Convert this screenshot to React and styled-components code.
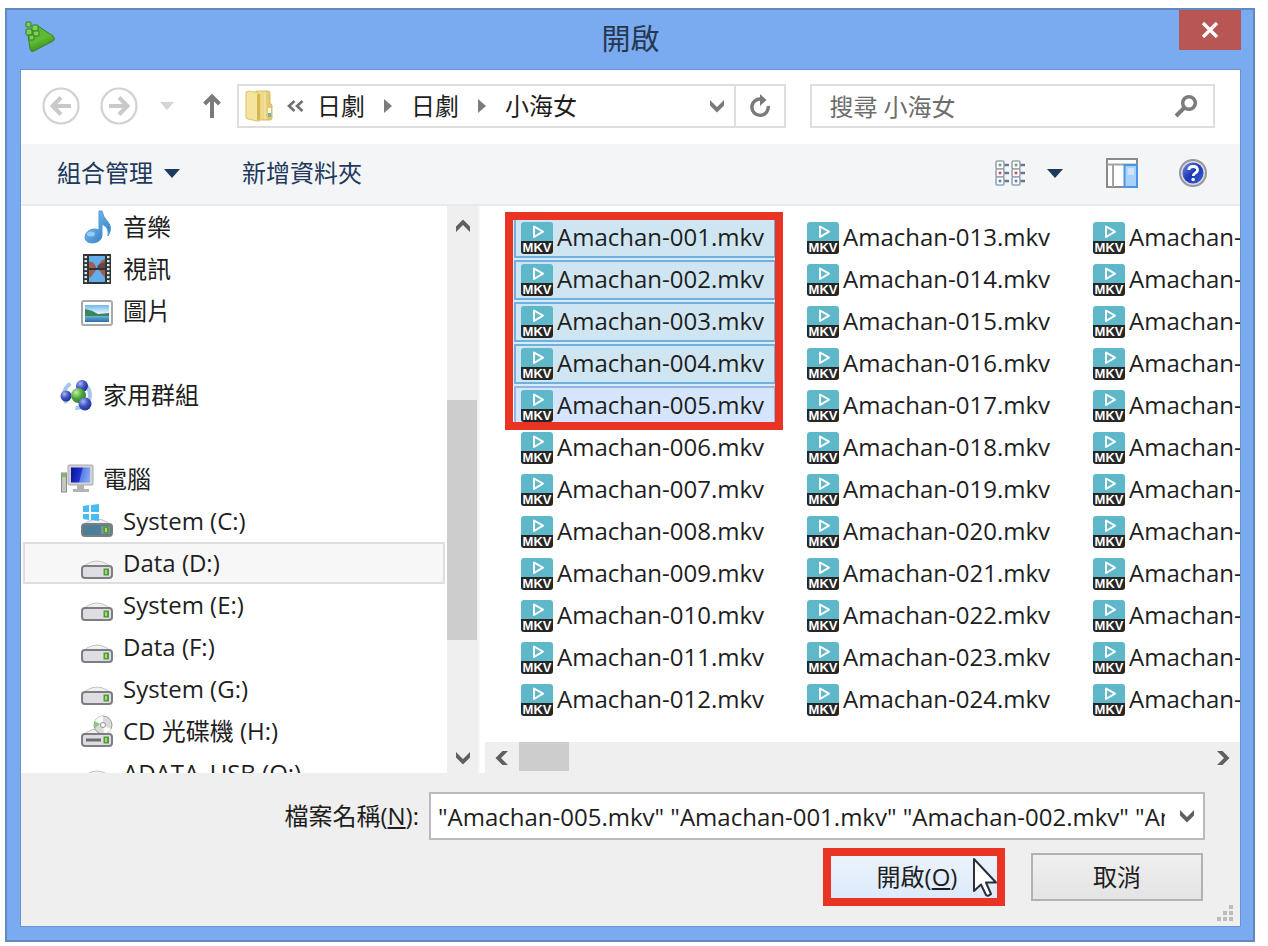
import React, { useState } from "react";
import styled, { createGlobalStyle, css } from "styled-components";

const GlobalStyle = createGlobalStyle`
  * {
    box-sizing: border-box;
  }

  body {
    margin: 0;
    background: #ffffff;
    font-family: "Open Sans", "Noto Sans CJK TC", sans-serif;
    font-size: 24px;
    line-height: 32px;
    color: #1e1e1e;
  }

  button,
  input {
    font: inherit;
    color: inherit;
  }

  button {
    padding: 0;
    border: 0;
    background: none;
  }

  svg {
    display: block;
    flex: none;
  }
`;

const Screen = styled.div`
  height: 100vh;
  min-height: 640px;
  padding: 8px 13px 4px 5px;
`;

const Window = styled.div`
  height: 100%;
  display: flex;
  flex-direction: column;
  padding: 0 12px 13px 13px;
  background: #7aabf0;
  border: 2px solid #6288bd;
`;

// Title bar
const TitleBar = styled.header`
  flex: none;
  height: 59px;
  display: grid;
  grid-template-columns: 62px 1fr 62px;
  align-items: start;
`;

const AppIcon = styled.div`
  padding: 11px 0 0 4px;
`;

const Title = styled.h1`
  margin: 0;
  padding-top: 9px;
  text-align: center;
  font-size: 29px;
  font-weight: 400;
  line-height: 40px;
  color: #26374f;
`;

const CloseButton = styled.button`
  height: 40px;
  display: flex;
  align-items: center;
  justify-content: center;
  background: #b85654;
`;

const Body = styled.div`
  flex: 1;
  min-height: 0;
  display: flex;
  flex-direction: column;
  background: #ffffff;
  border: 1px solid #6a93d2;
`;

// Address row
const NavRow = styled.nav`
  flex: none;
  height: 74px;
  display: flex;
  align-items: center;
  padding: 0 25px 2px 20px;
`;

const NavButtons = styled.div`
  width: 196px;
  flex: none;
  display: flex;
  align-items: center;
`;

const IconButton = styled.button`
  flex: none;
  display: flex;
  align-items: center;
  justify-content: center;
  width: ${({ $width }) => $width || 40}px;
  height: ${({ $height }) => $height || 40}px;
`;

const AddressBar = styled.div`
  flex: 550 1 0;
  min-width: 0;
  height: 44px;
  display: flex;
  align-items: center;
  border: 2px solid #dedede;
`;

const Crumbs = styled.div`
  flex: 1;
  min-width: 0;
  display: flex;
  align-items: center;
  padding-left: 6px;
  overflow: hidden;
`;

const Crumb = styled.a`
  flex: none;
  color: #1e1e1e;
  text-decoration: none;
`;

const CrumbArrow = styled.span`
  flex: none;
  width: 46px;
  display: flex;
  justify-content: center;
`;

const CrumbMore = styled.span`
  width: 44px;
  display: flex;
  justify-content: center;
`;

const Refresh = styled(IconButton)`
  border-left: 2px solid #dedede;
`;

const SearchBox = styled.div`
  flex: 404 1 0;
  min-width: 0;
  height: 44px;
  margin-left: 24px;
  display: flex;
  align-items: center;
  border: 2px solid #dedede;
`;

const TextInput = styled.input`
  flex: 1;
  min-width: 0;
  height: 40px;
  padding: 0 0 0 ${({ $pad }) => $pad}px;
  border: 0;
  outline: 0;
  background: transparent;

  &::placeholder {
    color: #6d6d6d;
    opacity: 1;
  }
`;

// Command bar
const Toolbar = styled.div`
  flex: none;
  height: 62px;
  display: flex;
  align-items: center;
  padding: 0 33px 2px 36px;
  background: #f4f5f7;
  border-bottom: 2px solid #e9eaec;
  color: #1e395b;
`;

const CommandButton = styled.button`
  display: flex;
  align-items: center;
  gap: 11px;
  margin-right: 62px;
`;

const ToolbarRight = styled.div`
  margin-left: auto;
  display: flex;
  align-items: center;
`;

const ViewButton = styled.button`
  display: flex;
  align-items: center;
  gap: 20px;
  margin-right: 43px;
`;

const PaneButton = styled.button`
  margin-right: 41px;
`;

// Content
const Content = styled.div`
  flex: 1;
  min-height: 0;
  display: flex;
`;

const Sidebar = styled.ul`
  flex: none;
  width: 426px;
  margin: 0;
  padding: 0 2px;
  list-style: none;
  overflow: hidden;
`;

const Place = styled.a`
  height: 42px;
  display: flex;
  align-items: center;
  gap: ${({ $level }) => ($level ? 10 : 9)}px;
  padding-left: ${({ $level }) => ($level ? 56 : 35)}px;
  border: 2px solid transparent;
  color: #1e1e1e;
  text-decoration: none;

  ${({ $active }) =>
    $active &&
    css`
      background: #f7f7f7;
      border-color: #dedede;
    `}
`;

const Spacer = styled.li`
  height: 42px;
`;

const VerticalBar = styled.div`
  flex: none;
  width: 31px;
  display: flex;
  flex-direction: column;
  align-items: center;
  background: #efefef;
`;

const VerticalTrack = styled.div`
  flex: 1;
  width: 100%;
  display: grid;
  grid-template-rows: 154fr 240fr 103fr;
`;

const VerticalThumb = styled.div`
  grid-row: 2;
  margin-right: 1px;
  background: #cdcdcd;
`;

const Splitter = styled.div`
  flex: none;
  width: 7px;
  border-left: 2px solid #f7f7f7;
`;

const FilePane = styled.div`
  flex: 1;
  min-width: 0;
  display: flex;
  flex-direction: column;
`;

const FileArea = styled.div`
  flex: 1;
  min-height: 0;
  position: relative;
  overflow: hidden;
`;

const FileList = styled.ul`
  margin: 0;
  padding: 12px 0 0 29px;
  list-style: none;
  display: grid;
  grid-auto-flow: column;
  grid-template-rows: repeat(12, 40px);
  grid-auto-columns: 262px;
  gap: 2px 24px;
`;

const FileItem = styled.li`
  display: flex;
  align-items: center;
  gap: 4px;
  padding-left: 5px;
  white-space: nowrap;
  border: 2px solid transparent;

  ${({ $state }) =>
    $state === "selected" &&
    css`
      background: #cfe6f2;
      border-color: #6fb0dc;
      box-shadow: 0 0 0 2px #d7ecf9;
    `}

  ${({ $state }) =>
    $state === "hover" &&
    css`
      background: #d5e5fd;
      border-color: #93b4e6;
    `}
`;

const FileName = styled.span`
  padding-bottom: 2px;
`;

const Marker = styled.div`
  position: absolute;
  top: 6px;
  left: 20px;
  width: 278px;
  height: 218px;
  border: 8px solid #e93323;
`;

const HorizontalBar = styled.div`
  flex: none;
  height: 31px;
  display: flex;
  align-items: center;
  background: #efefef;
`;

const HorizontalTrack = styled.div`
  flex: 1;
  height: 29px;
  align-self: start;
`;

const HorizontalThumb = styled.div`
  width: 50px;
  height: 29px;
  background: #cdcdcd;
`;

// Footer
const Footer = styled.form`
  flex: none;
  height: 153px;
  position: relative;
  padding: 19px 35px 0 35px;
  background: #efefef;
`;

const NameRow = styled.div`
  display: flex;
  align-items: center;
`;

const NameLabel = styled.label`
  flex: none;
  width: 363px;
  text-align: right;
`;

const NameBox = styled.div`
  flex: 1;
  min-width: 0;
  height: 48px;
  display: flex;
  align-items: center;
  margin-left: 10px;
  background: #ffffff;
  border: 2px solid #b9b9bf;
`;

const NameListButton = styled(IconButton)`
  padding-left: 6px;
`;

const Actions = styled.div`
  display: flex;
  align-items: center;
  justify-content: flex-end;
  gap: 26px;
  padding: 8px 2px 0 0;
`;

const OpenFrame = styled.div`
  position: relative;
  width: 182px;
  height: 58px;
  border: 8px solid #e93323;
`;

const OpenButton = styled.button`
  width: 100%;
  height: 100%;
  padding-left: 6px;
  background: linear-gradient(#ebf3fc, #dceafb);
`;

const CancelButton = styled.button`
  width: 172px;
  height: 48px;
  border: 2px solid #b2b2b2;
  background: linear-gradient(#efefef, #e4e4e4);
`;

const Pointer = styled.div`
  position: absolute;
  top: 1px;
  left: 141px;
  pointer-events: none;
`;

const Grip = styled.div`
  position: absolute;
  right: 6px;
  bottom: 4px;
`;

/* Icons */

const Chevron = ({ dir = "down", color = "#606060" }) => {
  const turn = { down: 0, left: 90, up: 180, right: 270 }[dir];
  return (
    <svg width="16" height="16" viewBox="0 0 16 16">
      <path
        d="M1 2 L8 9 L15 2 V7.5 L8 14.5 L1 7.5Z"
        fill={color}
        transform={`rotate(${turn} 8 8)`}
      />
    </svg>
  );
};

const Caret = ({ color = "#1e395b", width = 16, height = 9 }) => (
  <svg width={width} height={height} viewBox="0 0 16 9" preserveAspectRatio="none">
    <path d="M0 0H16L8 9Z" fill={color} />
  </svg>
);

const PlayerLogo = () => (
  <svg width="32" height="32" viewBox="0 0 32 32">
    <defs>
      <linearGradient id="logo" x1="0" y1="0" x2="0.4" y2="1">
        <stop offset="0" stopColor="#58b33c" />
        <stop offset="0.6" stopColor="#5fbb32" />
        <stop offset="1" stopColor="#3c8a22" />
      </linearGradient>
    </defs>
    <path
      d="M9 7L14 5L29 15Q32 18 29 20L10 30Q7 32 6 28L4 14Z"
      fill="url(#logo)"
      stroke="#3b8129"
    />
    <g fill="#7bd34f" stroke="#327c23">
      <rect x="2" y="1" width="5" height="5" rx="1" />
      <rect x="2" y="8" width="6" height="6" rx="1" />
      <rect x="8" y="4" width="6" height="6" rx="1" />
      <rect x="9" y="10" width="6" height="5" rx="1" />
      <rect x="5" y="14" width="5" height="5" rx="1" />
    </g>
  </svg>
);

const RoundArrow = ({ flip }) => (
  <svg width="38" height="38" viewBox="0 0 38 38">
    <circle cx="19" cy="19" r="17.5" fill="none" stroke="#d2d2d2" strokeWidth="2.2" />
    <path
      d="M29 19H11M19 10.5L10.5 19L19 27.5"
      fill="none"
      stroke="#c9c9c9"
      strokeWidth="4"
      transform={flip ? "rotate(180 19 19)" : undefined}
    />
  </svg>
);

const UpArrow = () => (
  <svg width="18" height="26" viewBox="0 0 18 26">
    <path d="M9 25V4M1.5 11L9 3.5L16.5 11" fill="none" stroke="#7a7a7a" strokeWidth="4" />
  </svg>
);

const FolderIcon = () => (
  <svg width="28" height="32" viewBox="0 0 28 32">
    <defs>
      <linearGradient id="folder" x1="0" x2="1">
        <stop offset="0" stopColor="#f8edae" />
        <stop offset="1" stopColor="#dfc05f" />
      </linearGradient>
    </defs>
    <path d="M11 1H23Q25 1 25 3V13L27 15V28Q27 30 25 30H10Z" fill="url(#folder)" stroke="#d9bd63" />
    <path d="M20 2V29" stroke="#efe09a" strokeWidth="2" />
    <path d="M1 2L4 1L14 3Q15 3 15 5V29Q15 32 12 31L3 29Q1 29 1 27Z" fill="#f4e49c" stroke="#ddc36e" />
    <path d="M12 4L15 4V29L12 31Z" fill="#d5b650" />
    <rect x="23" y="18" width="3" height="5" fill="#ffffff" />
    <rect x="23" y="23" width="3" height="4" fill="#75aeb4" />
  </svg>
);

const CrumbTriangle = () => (
  <svg width="8" height="14" viewBox="0 0 8 14">
    <path d="M0 0L8 7L0 14Z" fill="#7d7d7d" />
  </svg>
);

const DoubleChevron = () => (
  <svg width="17" height="12" viewBox="0 0 17 12">
    <path d="M7.5 1L2 6L7.5 11M15.5 1L10 6L15.5 11" fill="none" stroke="#707070" strokeWidth="2.6" />
  </svg>
);

const RefreshIcon = () => (
  <svg width="22" height="24" viewBox="0 0 22 24">
    <path d="M12 5A8.2 8.2 0 1 0 19.2 12" fill="none" stroke="#7a7a7a" strokeWidth="3.4" />
    <path d="M11 0L17.5 6L11 12Z" fill="#7a7a7a" />
  </svg>
);

const SearchIcon = () => (
  <svg width="24" height="24" viewBox="0 0 24 24">
    <circle cx="15" cy="9" r="6.3" fill="none" stroke="#7c7c7c" strokeWidth="3.6" />
    <path d="M10.5 13.5L2 22" stroke="#7c7c7c" strokeWidth="4" />
  </svg>
);

const ViewIcon = () => (
  <svg width="32" height="27" viewBox="0 0 32 27">
    {[0, 16].map((x) =>
      ["#7f9a5a", "#d34b45", "#4f7fc4"].map((dot, i) => (
        <g key={`${x}-${dot}`}>
          <path d={`M${x + 9} ${5 + i * 8}H${x + 14}`} stroke="#66768a" strokeWidth="2.4" />
          <rect
            x={x + 1}
            y={1 + i * 8}
            width="8"
            height="8"
            rx="1.5"
            fill="#ffffff"
            stroke="#97a3b3"
            strokeWidth="1.6"
          />
          <rect x={x + 3.7} y={3.7 + i * 8} width="2.6" height="2.6" fill={dot} />
        </g>
      ))
    )}
  </svg>
);

const PaneIcon = () => (
  <svg width="32" height="30" viewBox="0 0 32 30">
    <rect x="1" y="1" width="30" height="28" fill="#ffffff" stroke="#8a8a8a" strokeWidth="2" />
    <path d="M1 6.5H31M7 7V29" stroke="#a3a3a3" strokeWidth="2" />
    <rect x="18.5" y="7" width="12.5" height="22" fill="#a9d2fb" stroke="#4b96e4" strokeWidth="2" />
    <rect x="21.5" y="10" width="6.5" height="7" fill="#cde6ff" />
  </svg>
);

const HelpIcon = () => (
  <svg width="28" height="28" viewBox="0 0 28 28">
    <defs>
      <linearGradient id="help" x1="0" y1="0" x2="1" y2="1">
        <stop offset="0" stopColor="#6d8be0" />
        <stop offset="0.5" stopColor="#1b37b5" />
        <stop offset="1" stopColor="#3c62d2" />
      </linearGradient>
    </defs>
    <circle cx="14" cy="14" r="13" fill="#d9d9dc" stroke="#96979e" strokeWidth="2" />
    <circle cx="14" cy="14" r="10.5" fill="url(#help)" />
    <path
      d="M9.8 11Q10 7.5 14.2 7.5Q18.5 7.5 18.5 11Q18.5 13 16 14.3Q14.3 15.2 14.3 17"
      fill="none"
      stroke="#ffffff"
      strokeWidth="2.8"
    />
    <circle cx="14.2" cy="20.5" r="1.8" fill="#ffffff" />
  </svg>
);

const MusicIcon = () => (
  <svg width="32" height="34" viewBox="0 0 32 34">
    <defs>
      <linearGradient id="music" x1="0" y1="0" x2="1" y2="1">
        <stop offset="0" stopColor="#8ccdf6" />
        <stop offset="1" stopColor="#2274c0" />
      </linearGradient>
    </defs>
    <path
      d="M18 1L21 1Q22 7 27 12Q32 18 27 26Q28 19 24 16L21 14V26Q20 32 12 33Q4 33 4 27Q5 20 13 19Q16 19 18 20Z"
      fill="url(#music)"
      stroke="#4a9bd8"
    />
    <ellipse cx="10" cy="24" rx="4" ry="2.5" fill="#b4def8" opacity="0.7" />
  </svg>
);

const VideoIcon = () => (
  <svg width="32" height="32" viewBox="0 0 32 32">
    <rect x="2" y="1" width="28" height="30" fill="#2e3539" />
    <rect x="8" y="3" width="16" height="12" fill="#63aee8" />
    <rect x="8" y="17" width="16" height="12" fill="#63aee8" />
    <path d="M8 9Q13 8 15 14V15H8ZM24 6Q18 8 17 15H24ZM8 17H15L10 24L8 25ZM18 17H24V25Z" fill="#a25b50" />
    <path d="M17 12L24 9V15H16Z" fill="#6a4548" />
    {[3, 7, 11, 15, 19, 23, 27].map((y) => (
      <g key={y} fill="#dfe9e6">
        <rect x="3.5" y={y} width="2.5" height="2.2" />
        <rect x="26" y={y} width="2.5" height="2.2" />
      </g>
    ))}
  </svg>
);

const PictureIcon = () => (
  <svg width="32" height="32" viewBox="0 0 32 32">
    <defs>
      <linearGradient id="sky" x1="0" y1="0" x2="0" y2="1">
        <stop offset="0" stopColor="#6fb8ee" />
        <stop offset="0.5" stopColor="#e8f5f8" />
        <stop offset="0.7" stopColor="#5aa9c8" />
        <stop offset="1" stopColor="#2b6fb2" />
      </linearGradient>
    </defs>
    <rect x="1" y="6" width="30" height="24" rx="2" fill="#ffffff" stroke="#a8a8a8" strokeWidth="2" />
    <rect x="4" y="10" width="24" height="17" fill="url(#sky)" />
    <path d="M4 14Q11 15 17 19L28 18V21H4Z" fill="#3c8561" />
  </svg>
);

const HomegroupIcon = () => (
  <svg width="34" height="32" viewBox="0 0 34 32">
    <defs>
      <radialGradient id="ballBlue" cx="0.35" cy="0.3" r="0.8">
        <stop offset="0" stopColor="#a9b8f5" />
        <stop offset="0.5" stopColor="#3c50c0" />
        <stop offset="1" stopColor="#1d2d8c" />
      </radialGradient>
      <radialGradient id="ballGreen" cx="0.35" cy="0.3" r="0.8">
        <stop offset="0" stopColor="#c1efa4" />
        <stop offset="0.5" stopColor="#4da53a" />
        <stop offset="1" stopColor="#2d7427" />
      </radialGradient>
    </defs>
    <circle cx="17" cy="16" r="13" fill="none" stroke="#a8c7e8" strokeWidth="4" strokeDasharray="22 10" />
    <circle cx="22" cy="7" r="6" fill="url(#ballBlue)" />
    <circle cx="6" cy="17" r="5.5" fill="url(#ballBlue)" />
    <circle cx="18.5" cy="16.5" r="7.5" fill="url(#ballGreen)" />
    <circle cx="25" cy="25" r="6.5" fill="url(#ballBlue)" />
  </svg>
);

const ComputerIcon = () => (
  <svg width="34" height="30" viewBox="0 0 34 30">
    <defs>
      <linearGradient id="screen" x1="0" y1="0.4" x2="1" y2="0.6">
        <stop offset="0" stopColor="#0c16a0" />
        <stop offset="0.5" stopColor="#2235cf" />
        <stop offset="0.55" stopColor="#5b80ea" />
        <stop offset="1" stopColor="#87a9f4" />
      </linearGradient>
    </defs>
    <rect x="1.5" y="9" width="5" height="19" fill="#c5c5c5" stroke="#8c8c8c" />
    <rect x="2" y="10" width="4" height="3" fill="#74c34c" />
    <rect x="8" y="1" width="25" height="20" rx="1" fill="#d2d2d4" stroke="#aaaaac" />
    <rect x="11" y="3.5" width="19" height="15" fill="url(#screen)" />
    <path d="M17 21H24V25H29V28H13V25H17Z" fill="#b3b3b5" />
  </svg>
);

const DriveIcon = ({ kind }) => (
  <svg width="32" height="34" viewBox="0 0 32 34">
    <path d="M6 18Q16 12 26 18L31 22H1Z" fill="#f0f0f0" stroke="#c4c4c4" />
    {kind === "cd" && (
      <g>
        <circle cx="22" cy="11" r="9" fill="#dadada" stroke="#9c9c9c" />
        <path d="M22 11L14 7Q17 2 22 2ZM22 11L30 15Q28 19 23 20Z" fill="#f8f8f8" />
        <path d="M14 8L19 10L14 14Q13 11 14 8Z" fill="#8acb70" />
        <circle cx="22" cy="11" r="2.5" fill="#ffffff" stroke="#8e8e8e" />
      </g>
    )}
    <rect
      x="1"
      y="20"
      width="30"
      height="12"
      rx="3"
      fill={kind === "system" ? "#4d7f98" : "#dddde3"}
      stroke="#7e7e80"
      strokeWidth="2"
    />
    {kind === "system" && <rect x="20" y="22" width="9" height="8" fill="#7f9a8c" />}
    {kind === "cd" && <path d="M5 26H20" stroke="#6c6c6c" strokeWidth="3" />}
    <rect x="22.5" y="22.5" width="5.5" height="7" fill="#55993f" />
    <rect x="24" y="24" width="2" height="4" fill="#a3dc6a" />
    {kind === "system" && (
      <path d="M2 2L8 1V8H2ZM10 1L18 0V8H10ZM2 10H8V16L2 15ZM10 10H18V17L10 16Z" fill="#45bdf2" />
    )}
  </svg>
);

const MkvIcon = () => (
  <svg width="32" height="32" viewBox="0 0 32 32">
    <path d="M3 0H29Q32 0 32 3V19H0V3Q0 0 3 0Z" fill="#5fb8c9" />
    <path d="M0 19H32V29Q32 32 29 32H3Q0 32 0 29Z" fill="#262626" />
    <path d="M13 4.5V15L22 9.7Z" fill="none" stroke="#ffffff" strokeWidth="2" strokeLinejoin="round" />
    <text
      x="16"
      y="30"
      textAnchor="middle"
      fontFamily="Liberation Sans, sans-serif"
      fontWeight="700"
      fontSize="13"
      fill="#ffffff"
    >
      MKV
    </text>
  </svg>
);

const ArrowPointer = () => (
  <svg width="26" height="42" viewBox="0 0 26 42">
    <path
      d="M2 2V34L9 27.5L14 38Q16 40 19 37L14 25.5H24Z"
      fill="#ffffff"
      stroke="#2b2f38"
      strokeWidth="2"
      strokeLinejoin="round"
    />
  </svg>
);

const GripIcon = () => (
  <svg width="17" height="17" viewBox="0 0 17 17" fill="#bcbcbc">
    {[
      [12, 0],
      [6, 6],
      [12, 6],
      [0, 12],
      [6, 12],
      [12, 12],
    ].map(([x, y]) => (
      <rect key={`${x}-${y}`} x={x} y={y} width="4" height="4" />
    ))}
  </svg>
);

const places = [
  { name: "音樂", icon: <MusicIcon />, level: 1 },
  { name: "視訊", icon: <VideoIcon />, level: 1 },
  { name: "圖片", icon: <PictureIcon />, level: 1 },
  null,
  { name: "家用群組", icon: <HomegroupIcon />, level: 0 },
  null,
  { name: "電腦", icon: <ComputerIcon />, level: 0 },
  { name: "System (C:)", icon: <DriveIcon kind="system" />, level: 1 },
  { name: "Data (D:)", icon: <DriveIcon />, level: 1, active: true },
  { name: "System (E:)", icon: <DriveIcon />, level: 1 },
  { name: "Data (F:)", icon: <DriveIcon />, level: 1 },
  { name: "System (G:)", icon: <DriveIcon />, level: 1 },
  { name: "CD 光碟機 (H:)", icon: <DriveIcon kind="cd" />, level: 1 },
  { name: "ADATA_USB (O:)", icon: <DriveIcon />, level: 1 },
];

const files = Array.from(
  { length: 36 },
  (_, i) => `Amachan-${String(i + 1).padStart(3, "0")}.mkv`
);

const fileState = (index) => {
  if (index < 4) return "selected";
  return index === 4 ? "hover" : "none";
};

const App = () => {
  const [search, setSearch] = useState("");
  const [fileName, setFileName] = useState(
    '"Amachan-005.mkv" "Amachan-001.mkv" "Amachan-002.mkv" "Amachan-003.mkv" "Amachan-004.mkv"'
  );

  return (
    <Screen>
      <GlobalStyle />
      <Window>
        <TitleBar>
          <AppIcon>
            <PlayerLogo />
          </AppIcon>
          <Title>開啟</Title>
          <CloseButton aria-label="關閉">
            <svg width="18" height="16" viewBox="0 0 18 16">
              <path d="M2 1L16 15M16 1L2 15" stroke="#ffffff" strokeWidth="3.4" />
            </svg>
          </CloseButton>
        </TitleBar>

        <Body>
          {/* Navigation */}
          <NavRow>
            <NavButtons>
              <IconButton aria-label="上一頁">
                <RoundArrow />
              </IconButton>
              <IconButton aria-label="下一頁" $width={76}>
                <RoundArrow flip />
              </IconButton>
              <IconButton aria-label="最近的位置" $width={20}>
                <Caret color="#d4d4d4" width={14} height={8} />
              </IconButton>
              <IconButton aria-label="上移" $width={70}>
                <UpArrow />
              </IconButton>
            </NavButtons>
            <AddressBar>
              <Crumbs>
                <FolderIcon />
                <CrumbMore>
                  <DoubleChevron />
                </CrumbMore>
                <Crumb href="#drama">日劇</Crumb>
                <CrumbArrow>
                  <CrumbTriangle />
                </CrumbArrow>
                <Crumb href="#drama-jp">日劇</Crumb>
                <CrumbArrow>
                  <CrumbTriangle />
                </CrumbArrow>
                <Crumb href="#amachan">小海女</Crumb>
              </Crumbs>
              <IconButton aria-label="先前的位置" $width={34}>
                <Chevron color="#7a7a7a" />
              </IconButton>
              <Refresh aria-label="重新整理" $width={50}>
                <RefreshIcon />
              </Refresh>
            </AddressBar>
            <SearchBox>
              <TextInput
                $pad={17}
                aria-label="搜尋"
                placeholder="搜尋 小海女"
                value={search}
                onChange={(e) => setSearch(e.target.value)}
              />
              <IconButton aria-label="開始搜尋" $width={54}>
                <SearchIcon />
              </IconButton>
            </SearchBox>
          </NavRow>

          {/* Command bar */}
          <Toolbar>
            <CommandButton>
              組合管理
              <Caret />
            </CommandButton>
            <CommandButton>新增資料夾</CommandButton>
            <ToolbarRight>
              <ViewButton aria-label="變更檢視">
                <ViewIcon />
                <Caret />
              </ViewButton>
              <PaneButton aria-label="預覽窗格">
                <PaneIcon />
              </PaneButton>
              <button aria-label="說明">
                <HelpIcon />
              </button>
            </ToolbarRight>
          </Toolbar>

          <Content>
            <Sidebar>
              {places.map((place, i) =>
                place ? (
                  <li key={place.name}>
                    <Place href="#place" $level={place.level} $active={place.active}>
                      {place.icon}
                      {place.name}
                    </Place>
                  </li>
                ) : (
                  <Spacer key={i} />
                )
              )}
            </Sidebar>
            <VerticalBar>
              <IconButton aria-label="向上捲動" $width={31}>
                <Chevron dir="up" />
              </IconButton>
              <VerticalTrack>
                <VerticalThumb />
              </VerticalTrack>
              <IconButton aria-label="向下捲動" $width={31} $height={30}>
                <Chevron />
              </IconButton>
            </VerticalBar>
            <Splitter />

            <FilePane>
              <FileArea>
                <FileList>
                  {files.map((name, i) => (
                    <FileItem key={name} $state={fileState(i)}>
                      <MkvIcon />
                      <FileName>{name}</FileName>
                    </FileItem>
                  ))}
                </FileList>
                <Marker />
              </FileArea>
              <HorizontalBar>
                <IconButton aria-label="向左捲動" $width={34} $height={30}>
                  <Chevron dir="left" />
                </IconButton>
                <HorizontalTrack>
                  <HorizontalThumb />
                </HorizontalTrack>
                <IconButton aria-label="向右捲動" $width={34} $height={30}>
                  <Chevron dir="right" />
                </IconButton>
              </HorizontalBar>
            </FilePane>
          </Content>

          {/* File name and actions */}
          <Footer onSubmit={(e) => e.preventDefault()}>
            <NameRow>
              <NameLabel htmlFor="file-name">
                檔案名稱(<u>N</u>):
              </NameLabel>
              <NameBox>
                <TextInput
                  id="file-name"
                  $pad={7}
                  value={fileName}
                  onChange={(e) => setFileName(e.target.value)}
                />
                <NameListButton type="button" aria-label="檔名清單" $width={38}>
                  <Chevron />
                </NameListButton>
              </NameBox>
            </NameRow>
            <Actions>
              <OpenFrame>
                <OpenButton type="submit">
                  開啟(<u>O</u>)
                </OpenButton>
                <Pointer>
                  <ArrowPointer />
                </Pointer>
              </OpenFrame>
              <CancelButton type="button">取消</CancelButton>
            </Actions>
            <Grip>
              <GripIcon />
            </Grip>
          </Footer>
        </Body>
      </Window>
    </Screen>
  );
};

export default App;
